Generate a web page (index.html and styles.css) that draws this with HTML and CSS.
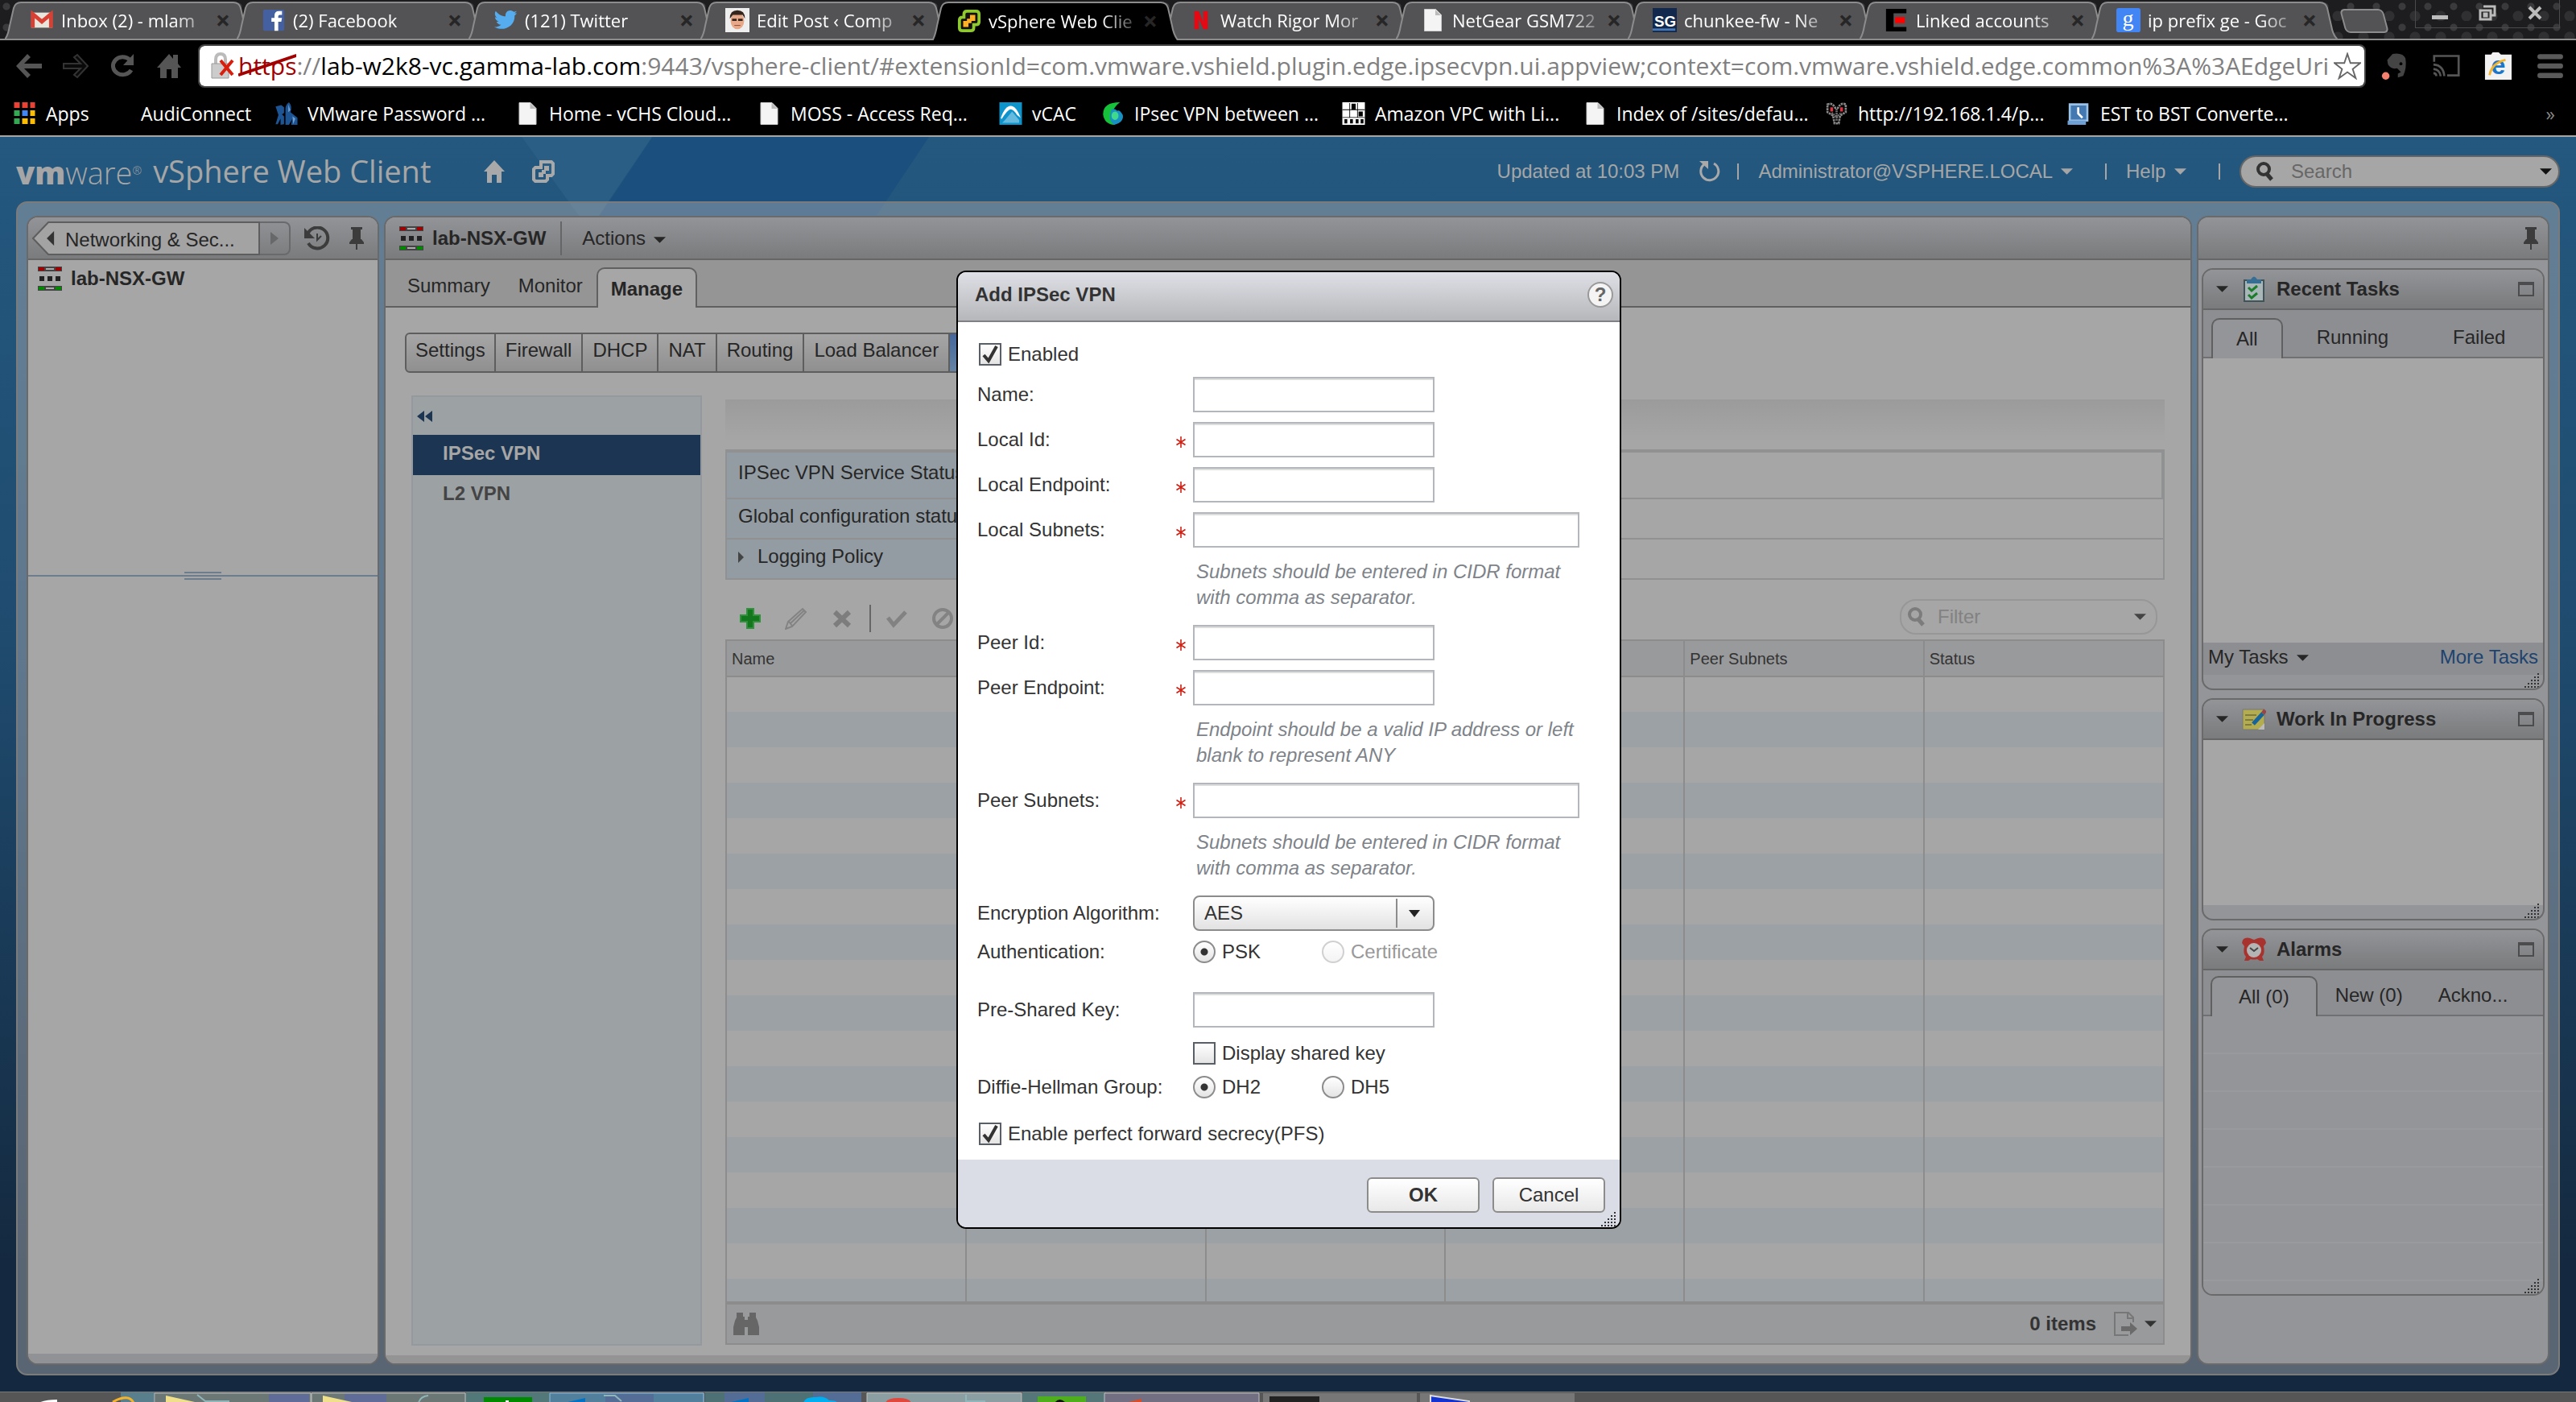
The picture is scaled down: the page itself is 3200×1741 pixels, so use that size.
FILE: index.html
```html
<!DOCTYPE html>
<html lang="en">

<head>
  <meta charset="UTF-8">
  <meta name="viewport" content="width=device-width, initial-scale=1.0">
  <title>vSphere Web Client</title>
  <link rel="stylesheet" href="styles.css">
</head>

<body>
  <svg class="defs" aria-hidden="true">
    <symbol id="page" viewBox="0 0 22 28"><path fill="#f4f4f4" stroke="#ccc" d="M.5.5h14l7 7v20H.5z"/><path fill="#bbb" d="M14 1v7h7z"/></symbol>
    <symbol id="down" viewBox="0 0 16 8"><path fill="currentColor" d="M0 0h16L8 8z"/></symbol>
    <symbol id="edge" viewBox="0 0 30 30">
      <path fill="#444" d="M0 0h30v6H0zM0 24h30v6H0z"/>
      <path fill="#a00000" d="M1 1h7v4H1zM22 1h7v4h-7z"/>
      <path fill="#008a00" d="M1 25h7v4H1zM22 25h7v4h-7z"/>
      <path fill="#aaa" d="M10 2h10v2H10zM10 26h10v2H10z"/>
      <path fill="#222" d="M2 12h6v6H2zM12 12h6v6h-6zM22 12h6v6h-6z"/>
    </symbol>
    <symbol id="pin" viewBox="0 0 18 28"><path fill="#3c3c3c" d="M2 0h14v3h-2v12h1l3 4v2H0v-2l3-4h1V3H2zM8 21h2v7H8z"/></symbol>
    <symbol id="glass" viewBox="0 0 24 26"><circle cx="10" cy="10" r="7" fill="none" stroke="currentColor" stroke-width="4"/><path stroke="currentColor" stroke-width="5" d="M14 16l6 7"/></symbol>
    <symbol id="max" viewBox="0 0 20 18"><path fill="none" stroke="#4c4c4e" stroke-width="2" d="M1 2h18v15H1z"/><path fill="#4c4c4e" d="M0 0h20v4H0z"/></symbol>
    <symbol id="grip" viewBox="0 0 20 20"><path stroke="#333" stroke-width="2" stroke-dasharray="2 2" d="M0 19h20M4 15h16M8 11h12M12 7h8M16 3h4"/></symbol>
    <symbol id="star" viewBox="0 0 12 14"><path stroke="#d22013" stroke-width="1.600" d="M6 0v14M.5 3.500l11 7M11.500 3.500l-11 7"/></symbol>
  </svg>

  <nav class="tabs">
    <a class="tab" href="#"><svg class="tab__icon" viewBox="0 0 32 32"><path fill="#e8e5dc" d="M2 6h28v20H2z"/><path fill="none" stroke="#d93f33" stroke-width="5" d="M4 26V8l12 10L28 8v18"/></svg><span class="tab__title">Inbox (2) - mlam</span><span class="tab__close">×</span></a>
    <a class="tab" href="#"><svg class="tab__icon" viewBox="0 0 32 32"><rect x="2" y="2" width="28" height="28" rx="2" fill="#4460a0"/><path fill="#fff" d="M17 30V18h-4v-5h4v-3q0-6 6-6h4v5h-3q-2 0-2 2v2h5l-1 5h-4v12z"/></svg><span class="tab__title">(2) Facebook</span><span class="tab__close">×</span></a>
    <a class="tab" href="#"><svg class="tab__icon" viewBox="0 0 32 32"><path fill="#55acee" d="M31 7l-3 3c1 14-15 22-27 15 4 0 7-1 9-3-3 0-5-2-6-4h3c-3-1-5-4-5-6l3 1C2 11 1 7 3 4c3 4 8 7 13 7-1-7 6-10 11-6l4-1-3 3z"/></svg><span class="tab__title">(121) Twitter</span><span class="tab__close">×</span></a>
    <a class="tab" href="#"><svg class="tab__icon" viewBox="0 0 32 32"><path fill="#eee" d="M0 0h32v32H0z"/><ellipse cx="16" cy="17" rx="9" ry="11" fill="#e7a98a"/><path fill="#35251d" d="M6 14q0-11 10-11t10 11l-3-5H10zM9 14h6v3H9zM17 14h6v3h-6z"/><path stroke="#843" d="M12 23h8"/></svg><span class="tab__title">Edit Post ‹ Comp</span><span class="tab__close">×</span></a>
    <a class="tab tab--active" href="#"><svg class="tab__icon" viewBox="0 0 32 32"><path fill="#111" stroke="#8fc92f" stroke-width="4" d="M13 3h12q4 0 4 4v10q0 4-4 4h-3v4q0 4-4 4H7q-4 0-4-4V15q0-4 4-4h2V7q0-4 4-4z"/><path fill="#ffb023" d="M17 8h7v8h-7zM8 16h7v8H8zM13 13h6v6h-6z"/></svg><span class="tab__title">vSphere Web Clie</span><span class="tab__close">×</span></a>
    <a class="tab" href="#"><svg class="tab__icon" viewBox="0 0 32 32"><path fill="#e50914" d="M7 4h6l6 14V4h6v24h-6l-6-14v14H7z"/></svg><span class="tab__title">Watch Rigor Mor</span><span class="tab__close">×</span></a>
    <a class="tab" href="#"><svg class="tab__icon tab__icon--page"><use href="#page"/></svg><span class="tab__title">NetGear GSM722</span><span class="tab__close">×</span></a>
    <a class="tab" href="#"><svg class="tab__icon" viewBox="0 0 32 32"><path fill="#12294d" d="M0 0h32v32H0z"/><path fill="#4a78b5" d="M0 27h30v3H0z"/><text x="2" y="24" class="fav">SG</text></svg><span class="tab__title">chunkee-fw - Ne</span><span class="tab__close">×</span></a>
    <a class="tab" href="#"><svg class="tab__icon" viewBox="0 0 32 32"><path d="M2 1h27v6H12v18h17v6H2z"/><path fill="#f00" d="M14 12h13v8H14z"/></svg><span class="tab__title">Linked accounts</span><span class="tab__close">×</span></a>
    <a class="tab" href="#"><svg class="tab__icon" viewBox="0 0 32 32"><rect width="32" height="32" rx="3" fill="#4285f4"/><text x="8" y="23" class="fav fav--g">g</text></svg><span class="tab__title">ip prefix ge - Goc</span><span class="tab__close">×</span></a>
    <button class="tabs__new" aria-label="New tab"></button>
    <div class="tabs__window">
      <button aria-label="Minimize"><svg viewBox="0 0 24 20"><path fill="#bbb" d="M2 13h20v5H2z"/></svg></button>
      <button aria-label="Restore"><svg viewBox="0 0 24 20"><path fill="none" stroke="#bbb" stroke-width="3" d="M7 2h14v11h-4M3 7h13v11H3zM8 11v3h3v-3z"/></svg></button>
      <button aria-label="Close"><svg viewBox="0 0 24 20"><path stroke="#bbb" stroke-width="4" d="M5 3l14 14M19 3L5 17"/></svg></button>
    </div>
  </nav>

  <div class="toolbar">
    <div class="toolbar__nav">
      <button aria-label="Back"><svg viewBox="0 0 32 32"><path fill="#555" d="M0 16L14 1l4 4-8 8h22v6H10l8 8-4 4z"/></svg></button>
      <button aria-label="Forward"><svg viewBox="0 0 32 32"><path fill="#0a0a0a" stroke="#333" stroke-width="2" d="M31 16L18 2l-4 3 8 8H1v6h21l-8 8 4 3z"/></svg></button>
      <button aria-label="Reload"><svg viewBox="0 0 32 32"><path fill="none" stroke="#555" stroke-width="5" d="M27 21a12 11 0 1 1-2-13"/><path fill="#555" d="M30 1v14H17z"/></svg></button>
      <button aria-label="Home"><svg viewBox="0 0 32 32"><path fill="#555" d="M16 1l5 6V2h6v11l4 5h-4v13h-8V20h-6v11H5V18H1z"/></svg></button>
    </div>
    <div class="omnibox">
      <svg class="omnibox__lock" viewBox="0 0 30 34"><path fill="none" stroke="#bbb" stroke-width="4" d="M6 16V9q0-7 6-7t6 7v7"/><path fill="#ccc" stroke="#999" d="M1 14h21v18H1z"/><path stroke="#d81e0c" stroke-width="4" d="M12 10l15 18M27 10L12 28"/></svg>
      <div class="omnibox__url"><span class="omnibox__scheme">https<svg viewBox="0 0 72 30" preserveAspectRatio="none"><path stroke="#a30000" stroke-width="4" d="M0 28L72 2"/></svg></span>://<b>lab-w2k8-vc.gamma-lab.com</b>:9443/vsphere-client/#extensionId=com.vmware.vshield.plugin.edge.ipsecvpn.ui.appview;context=com.vmware.vshield.edge.common%3A%3AEdgeUri</div>
      <svg class="omnibox__star" viewBox="0 0 36 36"><path fill="#fff" stroke="#666" stroke-width="2" d="M18 2l4 12h13l-10 8 4 12-11-8-11 8 4-12L1 14h13z"/></svg>
    </div>
    <div class="toolbar__ext">
      <svg viewBox="0 0 34 36"><path fill="#444" d="M8 10l7-8q14-2 17 6 2 12-3 23l-7 2v-5l4-2-5-5q-8 2-12-5z"/><circle cx="6" cy="31" r="5" fill="#f5806f"/><circle cx="26" cy="15" r="2"/></svg>
      <svg viewBox="0 0 38 32"><path fill="none" stroke="#555" stroke-width="3" d="M2 10V2h34v27H20"/><path fill="none" stroke="#555" stroke-width="3" d="M1 14q14 1 15 16M1 20q9 1 10 10M1 26q4 0 4 4"/></svg>
      <svg viewBox="0 0 36 36"><path fill="#f2f2f2" d="M1 3h8l2-3h8l3 3h14v33H1z"/><text x="9" y="29" class="fav fav--ie">e</text><path fill="none" stroke="#f3b52b" stroke-width="3" d="M7 30Q10 14 28 10"/></svg>
      <svg viewBox="0 0 32 30"><path stroke="#5a5a5a" stroke-width="6" stroke-linecap="round" d="M4 4h24M4 15h24M4 26h24"/></svg>
    </div>
  </div>

  <nav class="bookmarks">
    <a href="#"><svg viewBox="0 0 26 28"><path fill="#ea4335" d="M0 0h7v7H0zM10 0h7v7h-7zM20 0h6v7h-6z"/><path fill="#34a853" d="M0 10h7v7H0zM0 20h7v7H0z"/><path fill="#4285f4" d="M10 10h7v7h-7z"/><path fill="#fbbc05" d="M20 10h6v7h-6zM10 20h7v7h-7zM20 20h6v7h-6z"/></svg>Apps</a>
    <a href="#"><svg viewBox="0 0 32 32"></svg>AudiConnect</a>
    <a href="#"><svg viewBox="0 0 32 32"><path fill="#1d5594" d="M1 6l8-2 4 3v8l-3 2 3 3v11l-5 1v-9l-4 8H1l4-13zM15 12q-1-8 5-12 5 6 2 14l10 8v10h-9l2-9-5 9h-5z"/><path fill="#6f9fd0" d="M19 3l3 8-3 3zM25 20l4 3-3 8z"/></svg>VMware Password ...</a>
    <a href="#"><svg><use href="#page"/></svg>Home - vCHS Cloud...</a>
    <a href="#"><svg><use href="#page"/></svg>MOSS - Access Req...</a>
    <a href="#"><svg viewBox="0 0 32 32"><path fill="#0e94cd" d="M0 0h32v32H0z"/><path fill="#fff" d="M2 22Q8 5 16 5t14 17l-5-4q-5-8-9-8T3 24z"/><path fill="#65bade" d="M8 25l10-12 10 12v4H4z"/></svg>vCAC</a>
    <a href="#"><svg viewBox="0 0 32 32"><path fill="#16c23a" d="M26 0Q2 0 2 17q2 14 16 15l4-8-8-8q4-10 12-16z"/><path fill="#1791c4" d="M14 10q-6 16 4 22 14-4 12-14-4-8-8-6-4-4-8-2z"/><ellipse cx="19" cy="19" rx="5" ry="6" fill="#3fd98c"/></svg>IPsec VPN between ...</a>
    <a href="#"><svg viewBox="0 0 32 32"><path fill="#fff" d="M0 0h32v32H0z"/><path d="M13 2h6v8h-6zM23 13h6v7h-6zM3 24h4v6H3zM11 24h4v6h-4zM19 24h4v6h-4zM26 24h4v6h-4zM10 1h1v20h-1zM21 1h1v20h-1zM0 10h32v1H0zM0 21h32v1H0z"/></svg>Amazon VPC with Li...</a>
    <a href="#"><svg><use href="#page"/></svg>Index of /sites/defau...</a>
    <a href="#"><svg viewBox="0 0 32 32"><path fill="none" stroke="#888" stroke-width="3" stroke-dasharray="3 1" d="M3 3q7-3 11 5h4q4-8 11-5v11l-8 5-2 11h-6l-2-11-8-5z"/><path fill="none" stroke="#777" stroke-dasharray="2 1" stroke-width="3" d="M9 15l7 6 7-6M16 9v18"/><path fill="#d34" d="M7 7h4v6H7zM21 7h4v6h-4z"/></svg>http://192.168.1.4/p...</a>
    <a href="#"><svg viewBox="0 0 32 32"><path fill="#4379b0" stroke="#9cc2e8" stroke-width="3" d="M3 3h25v23H3z"/><path fill="#6ea0d5" d="M0 26h26v6H0z"/><path fill="none" stroke="#fff" stroke-width="3" d="M15 7v9l6 6"/></svg>EST to BST Converte...</a>
    <span class="bookmarks__more">»</span>
  </nav>

  <div class="app">
    <header class="header">
      <h1 class="header__title"><span class="header__brand"><b>vm</b>ware<sup>®</sup></span>vSphere Web Client</h1>
      <svg class="header__home" viewBox="0 0 26 28"><path fill="#a9a9a9" d="M13 0l13 14h-4v14h-6V18h-6v10H4V14H0z"/></svg>
      <svg class="header__vs" viewBox="0 0 28 28"><path fill="none" stroke="#a9a9a9" stroke-width="4" d="M11 2h13l2 2v13l-2 2h-5v5l-2 2H4l-2-2V11l2-2h7z"/><path fill="#a9a9a9" d="M15 7h6v6h-6zM8 15h6v6H8zM12 12h5v5h-5z"/></svg>
      <div class="header__right">
        <span>Updated at 10:03 PM</span>
        <svg class="header__refresh" viewBox="0 0 28 28"><path fill="none" stroke="#a9a9a9" stroke-width="3" d="M19 4a11 11 0 1 1-12 1"/><path fill="#a9a9a9" d="M1 1h11v10z"/></svg>
        <i></i>
        <a href="#">Administrator@VSPHERE.LOCAL <svg class="arrow"><use href="#down"/></svg></a>
        <i></i>
        <a href="#">Help <svg class="arrow"><use href="#down"/></svg></a>
        <i></i>
        <label class="search"><svg class="search__icon"><use href="#glass"/></svg><input type="text" placeholder="Search" aria-label="Search"><svg class="arrow"><use href="#down"/></svg></label>
      </div>
    </header>

    <main class="frame">
      <aside class="panel">
        <div class="panel__header">
          <button class="back"><svg viewBox="0 0 282 42" preserveAspectRatio="none"><path fill="#a3a3a3" stroke="#5e5e5e" stroke-width="2" d="M281 1H20L1 21l19 20h261z"/><path fill="#333" d="M18 21l9-9v18z"/></svg><span>Networking &amp; Sec...</span></button>
          <button class="forward" aria-label="Forward"><svg viewBox="0 0 10 16"><path fill="#67686a" d="M0 0l10 8-10 8z"/></svg></button>
          <svg class="history" viewBox="0 0 32 30"><path fill="none" stroke="#3c3c3c" stroke-width="4" d="M4 10a13 13 0 1 1 1 11"/><path fill="#3c3c3c" d="M0 2v13h13z"/><path fill="none" stroke="#3c3c3c" stroke-width="2" d="M16 9v8l5-5"/></svg>
          <svg class="pin"><use href="#pin"/></svg>
        </div>
        <div class="tree">
          <a class="tree__item" href="#"><svg class="edge"><use href="#edge"/></svg>lab-NSX-GW</a>
        </div>
        <div class="splitter"><span></span></div>
        <div class="panel__fill"></div>
        <div class="panel__footer"></div>
      </aside>

      <section class="panel">
        <div class="panel__header panel__header--object">
          <svg class="edge"><use href="#edge"/></svg>
          <b>lab-NSX-GW</b>
          <button class="actions">Actions <svg class="arrow"><use href="#down"/></svg></button>
        </div>
        <nav class="objectTabs">
          <a href="#">Summary</a>
          <a href="#">Monitor</a>
          <a class="active" href="#">Manage</a>
        </nav>
        <div class="manage">
          <div class="buttonBar">
            <button>Settings</button><button>Firewall</button><button>DHCP</button><button>NAT</button><button>Routing</button><button>Load Balancer</button><span class="buttonBar__on"></span>
          </div>
          <div class="manage__body">
            <nav class="sideNav">
              <button class="sideNav__collapse" aria-label="Collapse"><svg viewBox="0 0 20 14"><path fill="#1b3552" d="M9 0v14L0 7zM19 0v14l-9-7z"/></svg></button>
              <a class="active" href="#">IPSec VPN</a>
              <a href="#">L2 VPN</a>
            </nav>
            <div class="content">
              <div class="content__bar"></div>
              <div class="status">
                <div class="status__row status__row--first"><span>IPSec VPN Service Status</span></div>
                <div class="status__row"><span>Global configuration status</span></div>
                <div class="status__row"><span><svg class="twisty" viewBox="0 0 7 14"><path fill="#444" d="M0 0l7 7-7 7z"/></svg>Logging Policy</span></div>
              </div>
              <div class="tools">
                <button aria-label="Add"><svg viewBox="0 0 28 28"><path fill="#12771d" stroke="#2f9139" stroke-width="2" d="M10 2h8v8h8v8h-8v8h-8v-8H2v-8h8z"/></svg></button>
                <button aria-label="Edit"><svg viewBox="0 0 28 28"><path fill="none" stroke="#838383" stroke-width="2" d="M1 27l3-9L22 2l4 4L9 24zM5 18l4 5M7 20L24 4"/></svg></button>
                <button aria-label="Delete"><svg viewBox="0 0 28 28"><path stroke="#7d7d7d" stroke-width="6" d="M5 6l18 17M23 6L5 23"/></svg></button>
                <i></i>
                <button aria-label="Enable"><svg viewBox="0 0 28 28"><path fill="none" stroke="#828282" stroke-width="5" d="M3 13l7 9L25 6"/></svg></button>
                <button aria-label="Disable"><svg viewBox="0 0 28 28"><circle cx="14" cy="14" r="11" fill="none" stroke="#838383" stroke-width="4"/><path stroke="#838383" stroke-width="4" d="M6 22L22 6"/></svg></button>
                <label class="filter"><svg class="search__icon"><use href="#glass"/></svg><input type="text" placeholder="Filter" aria-label="Filter"><svg class="arrow"><use href="#down"/></svg></label>
              </div>
              <div class="grid">
                <table>
                  <thead>
                    <tr><th>Name</th><th></th><th></th><th></th><th>Peer Subnets</th><th>Status</th></tr>
                  </thead>
                  <tbody id="rows"></tbody>
                </table>
              </div>
              <div class="grid__footer">
                <svg class="find" viewBox="0 0 32 28"><path fill="#666" d="M4 0h8v5h2v4h4V5h2V0h8v6l2 4 2 8v10H18V18h-4v10H0V18l2-8 2-4z"/></svg>
                <b>0 items</b>
                <svg class="export" viewBox="0 0 30 30"><path fill="none" stroke="#777" stroke-width="2" d="M18 29H1V1h17l6 6v6M17 1v7h7"/><path fill="#6a6a6a" d="M9 18h11v-5l9 8-9 8v-5H9z"/></svg>
                <svg class="arrow"><use href="#down"/></svg>
              </div>
            </div>
          </div>
        </div>
        <div class="panel__footer panel__footer--light"></div>
      </section>

      <aside class="panel panel--side">
        <div class="panel__header panel__header--end"><svg class="pin"><use href="#pin"/></svg></div>
        <section class="portlet portlet--tasks">
          <h2><svg class="arrow"><use href="#down"/></svg><svg class="portlet__icon" viewBox="0 0 30 32"><path fill="#a9b7b9" stroke="#3f5358" stroke-width="2" d="M3 5h24v26H3z"/><path fill="#366d92" d="M6 4h5q4-7 8 0h5v5H6z"/><path fill="none" stroke="#1b7d2c" stroke-width="3" d="M8 14l4 4 7-6M8 23l4 4 7-6"/></svg>Recent Tasks<svg class="max"><use href="#max"/></svg></h2>
          <nav><a class="active" href="#">All</a><a href="#">Running</a><a href="#">Failed</a></nav>
          <div class="portlet__body"></div>
          <div class="portlet__links"><a href="#">My Tasks <svg class="arrow"><use href="#down"/></svg></a><a class="more" href="#">More Tasks</a></div>
          <div class="portlet__foot"></div>
          <svg class="grip"><use href="#grip"/></svg>
        </section>
        <section class="portlet portlet--work">
          <h2><svg class="arrow"><use href="#down"/></svg><svg class="portlet__icon" viewBox="0 0 30 32"><path fill="#b3ad50" stroke="#777" d="M1 4h27v25H1z"/><path stroke="#7c7a45" stroke-width="2" d="M4 11h14M4 17h10M4 23h8"/><path stroke="#16649a" stroke-width="5" d="M14 22L26 9"/><path stroke="#944" stroke-width="5" d="M26 9l3-4"/><path fill="#bbb" d="M20 29l8-8v8z"/></svg>Work In Progress<svg class="max"><use href="#max"/></svg></h2>
          <div class="portlet__body"></div>
          <div class="portlet__foot"></div>
          <svg class="grip"><use href="#grip"/></svg>
        </section>
        <section class="portlet portlet--alarms">
          <h2><svg class="arrow"><use href="#down"/></svg><svg class="portlet__icon" viewBox="0 0 30 32"><path fill="#a8332e" d="M0 8q1-8 10-6l5 2 5-2q9-2 10 6l-3 4q2 9-2 13l2 5h-5l-3-2q-4 1-8 0l-3 2H3l2-5q-4-4-2-13z"/><circle cx="15" cy="17" r="9" fill="#b4b4b4"/><path fill="none" stroke="#444" stroke-width="2" d="M10 14l5 4 5-4"/></svg>Alarms<svg class="max"><use href="#max"/></svg></h2>
          <nav><a class="active" href="#">All (0)</a><a href="#">New (0)</a><a href="#">Ackno...</a></nav>
          <div class="portlet__body portlet__body--lines"></div>
          <svg class="grip"><use href="#grip"/></svg>
        </section>
      </aside>
    </main>

    <div class="overlay">
      <form class="dialog" role="dialog" aria-labelledby="dialogTitle" onsubmit="return false">
        <div class="dialog__header">
          <h2 id="dialogTitle">Add IPSec VPN</h2>
          <button type="button" class="dialog__help" aria-label="Help">?</button>
        </div>
        <div class="dialog__body">
          <label class="check row--check"><input type="checkbox" checked>Enabled</label>
          <div class="row"><label for="name">Name:</label><input id="name" type="text"></div>
          <div class="row"><label for="localId">Local Id:<svg class="req"><use href="#star"/></svg></label><input id="localId" type="text"></div>
          <div class="row"><label for="localEndpoint">Local Endpoint:<svg class="req"><use href="#star"/></svg></label><input id="localEndpoint" type="text"></div>
          <div class="row row--hinted"><label for="localSubnets">Local Subnets:<svg class="req"><use href="#star"/></svg></label><input id="localSubnets" class="wide" type="text"></div>
          <p class="hint">Subnets should be entered in CIDR format<br>with comma as separator.</p>
          <div class="row"><label for="peerId">Peer Id:<svg class="req"><use href="#star"/></svg></label><input id="peerId" type="text"></div>
          <div class="row row--hinted"><label for="peerEndpoint">Peer Endpoint:<svg class="req"><use href="#star"/></svg></label><input id="peerEndpoint" type="text"></div>
          <p class="hint">Endpoint should be a valid IP address or left<br>blank to represent ANY</p>
          <div class="row row--hinted"><label for="peerSubnets">Peer Subnets:<svg class="req"><use href="#star"/></svg></label><input id="peerSubnets" class="wide" type="text"></div>
          <p class="hint">Subnets should be entered in CIDR format<br>with comma as separator.</p>
          <div class="row"><label for="algorithm">Encryption Algorithm:</label><select id="algorithm"><option>AES</option></select></div>
          <div class="row row--auth"><span class="row__label">Authentication:</span><label class="check"><input type="radio" name="auth" checked>PSK</label><label class="check check--off"><input type="radio" name="auth" disabled>Certificate</label></div>
          <div class="row row--key"><label for="psk">Pre-Shared Key:</label><input id="psk" type="text"></div>
          <div class="row row--display"><span class="row__label"></span><label class="check check--wide"><input type="checkbox">Display shared key</label></div>
          <div class="row row--group"><span class="row__label">Diffie-Hellman Group:</span><label class="check"><input type="radio" name="dh" checked>DH2</label><label class="check"><input type="radio" name="dh">DH5</label></div>
          <label class="check"><input type="checkbox" checked>Enable perfect forward secrecy(PFS)</label>
        </div>
        <div class="dialog__footer">
          <button type="submit"><b>OK</b></button>
          <button type="button">Cancel</button>
          <svg class="grip"><use href="#grip"/></svg>
        </div>
      </form>
    </div>
  </div>

  <footer class="taskbar">
    <svg viewBox="0 0 1960 13" preserveAspectRatio="xMinYMin slice">
      <path fill="#5a7f8c" d="M150 0h42v13h-42z"/>
      <path fill="#6b7775" d="M193 1h386v12H193z"/>
      <path fill="#5f6c97" d="M334 2h50v11h-50zM428 2h52v11h-52z"/>
      <path fill="#53787a" d="M579 0h104v13H579z"/>
      <path fill="#52809c" d="M683 1h192v12H683z"/>
      <path fill="#546d96" d="M752 2h60v11h-60zM900 0h50v13h-50zM1010 0h60v13h-60z"/>
      <path fill="#4d7174" d="M876 0h24v13h-24zM950 0h60v13h-60z"/>
      <path fill="#8b9fa3" d="M1077 1h192v12h-192z"/>
      <path fill="#55777a" d="M1270 0h104v13h-104z"/>
      <path fill="#726f83" d="M1372 1h192v12h-192z"/>
      <path fill="none" stroke="#8fb6ba" stroke-width="2" d="M245 3l10 8h30M750 4h14l8 7M520 13q2-8 12-9M1200 3v8h24"/>
      <path fill="none" stroke="#c0c4c4" d="M192 13V1h194v12M387 13V1h191v12M1077 13V1h192v12M1372 13V1h192v12"/>
      <path fill="none" stroke="#8bbbe0" d="M683 13V1h191v12"/>
      <path fill="#fff" d="M48 13q8-4 23-4v4z"/>
      <path fill="none" stroke="#f4b32a" stroke-width="3" d="M140 12q20-11 26 1"/>
      <path fill="#f0e08b" d="M206 4l36 8v1h-36zM401 4l36 8v1h-36z"/>
      <path fill="#008a00" d="M601 6h60v7h-60z"/>
      <path fill="#fff" d="M628 10h4v3h-4z"/>
      <path fill="#0072c6" d="M701 13l26-6v6zM904 13l26-6v6z"/>
      <path fill="#00aff0" d="M998 13q2-8 16-7 10-2 16 4 10 0 10 3z"/>
      <path fill="#e0483e" d="M1100 13q2-6 16-6t16 6z"/>
      <path fill="#4fae1c" d="M1289 5h60v8h-60z"/>
      <path fill="#111" d="M1310 13q6-8 14 0z"/>
      <path fill="#dc4a26" d="M1398 13l20-5v5z"/>
      <path fill="#777" d="M1569 1h191v12h-191zM1764 1h192v12h-192z"/>
      <path fill="#222" d="M1577 5h62v8h-62z"/>
      <path fill="#1432d0" stroke="#ddd" stroke-width="2" d="M1777 13V4l48 7v4z"/>
    </svg>
  </footer>

  <script>
    // empty striped rows, six cells each
    const rows = document.getElementById("rows");
    for (let i = 0; i < 18; i++) {
      const tr = rows.insertRow();
      for (let j = 0; j < 6; j++) {
        tr.insertCell();
      }
    }
  </script>
</body>

</html>
```
FILE: styles.css
```css
* {
  box-sizing: border-box;
}

body {
  background-color: #000;
  color: #222;
  display: flex;
  flex-direction: column;
  font-family: "Liberation Sans", Arial, sans-serif;
  font-size: 24px;
  height: 100vh;
  line-height: 28px;
  margin: 0;
  overflow: hidden;
}

a {
  color: inherit;
  text-decoration: none;
}

button,
input,
select {
  color: inherit;
  font: inherit;
}

button {
  background: none;
  border: none;
  padding: 0;
}

h1,
h2,
p {
  margin: 0;
}

svg {
  flex: none;
}

.defs {
  height: 0;
  position: absolute;
  width: 0;
}

.arrow {
  height: 8px;
  width: 15px;
}

/* browser */

.tabs,
.toolbar,
.bookmarks {
  color: #fff;
  display: flex;
  flex: none;
  font-family: "Open Sans", "Noto Sans", sans-serif;
}

.tabs {
  background-color: #1d1d1f;
  background-image: radial-gradient(circle at 8px 8px, #3a3a3c 4px, transparent 5px), radial-gradient(circle at 24px 20px, #303032 6px, transparent 7px);
  background-size: 32px 26px;
  border-bottom: 2px solid #8c8c8c;
  height: 50px;
  padding-left: 6px;
}

.tab {
  align-items: center;
  background: url("data:image/svg+xml,%3Csvg xmlns='http://www.w3.org/2000/svg' viewBox='0 0 306 46' preserveAspectRatio='none'%3E%3Cpath fill='%23535355' stroke='%238c8c8c' stroke-width='2' d='M0 47Q4 42 6 30L11 8Q13 1 20 1H284Q291 1 293 8L298 30Q300 42 306 47'/%3E%3C/svg%3E") 0 0 / 100% 100%;
  display: flex;
  font-size: 22px;
  height: 46px;
  line-height: 36px;
  margin: 2px -18px 0 0;
  padding: 0 26px 0 30px;
  width: 306px;
}

.tab--active {
  background-image: url("data:image/svg+xml,%3Csvg xmlns='http://www.w3.org/2000/svg' viewBox='0 0 306 48' preserveAspectRatio='none'%3E%3Cpath stroke='%238c8c8c' stroke-width='2' d='M0 49Q4 42 6 30L11 8Q13 1 20 1H284Q291 1 293 8L298 30Q300 42 306 49'/%3E%3C/svg%3E");
  height: 48px;
  z-index: 1;
}

.tab__icon {
  height: 30px;
  width: 32px;
}

.tab__icon--page {
  height: 28px;
}

.tab__title {
  flex: 1;
  margin: 0 6px 0 8px;
  mask-image: linear-gradient(to right, #000 75%, transparent 105%);
  overflow: hidden;
  white-space: nowrap;
}

.tab__close {
  color: #262626;
  font-size: 32px;
  font-weight: bold;
}

.fav {
  fill: #fff;
  font: bold 20px "Liberation Sans", sans-serif;
}

.fav--g {
  font: 30px "Liberation Serif", serif;
}

.fav--ie {
  fill: #1b76c9;
  font-size: 34px;
}

.tabs__new {
  background-color: #535355;
  border: 2px solid #8c8c8c;
  border-radius: 6px;
  height: 30px;
  margin: 11px 0 0 24px;
  transform: skewX(15deg);
  width: 54px;
}

.tabs__window {
  border: 1px solid #4a4a4c;
  border-top: none;
  display: flex;
  height: 35px;
  justify-content: space-around;
  margin-left: auto;
  margin-right: 20px;
  width: 180px;
}

.tabs__window svg {
  height: 20px;
  width: 24px;
}

.toolbar {
  align-items: center;
  height: 64px;
  padding: 0 15px 0 20px;
}

.toolbar__nav {
  display: flex;
  gap: 26px;
  width: 228px;
}

.toolbar__nav svg {
  display: block;
  height: 32px;
  width: 32px;
}

.omnibox {
  align-items: center;
  background-color: #fff;
  border-radius: 6px;
  color: #808080;
  display: flex;
  flex: 1;
  font-size: 30px;
  height: 50px;
  min-width: 0;
  outline: 2px solid #444;
  padding: 0 4px 0 14px;
}

.omnibox__lock {
  height: 34px;
  width: 30px;
}

.omnibox__url {
  flex: 1;
  line-height: 44px;
  margin-left: 4px;
  overflow: hidden;
  white-space: nowrap;
}

.omnibox__url b {
  color: #000;
  font-weight: normal;
}

.omnibox__scheme {
  color: #a30000;
  position: relative;
}

.omnibox__scheme svg {
  height: 28px;
  left: 0;
  position: absolute;
  top: 6px;
  width: 100%;
}

.omnibox__star {
  height: 34px;
  width: 34px;
}

.toolbar__ext {
  align-items: center;
  display: flex;
  justify-content: space-between;
  margin-left: 20px;
  width: 228px;
}

.toolbar__ext svg {
  height: 34px;
  width: 34px;
}

.bookmarks {
  align-items: center;
  border-bottom: 2px solid #a6a6a6;
  display: grid;
  font-size: 23px;
  grid-template-columns: 118px 207px 300px 300px 300px 127px 299px 300px 300px 301px 1fr auto;
  height: 56px;
  line-height: 36px;
  padding: 0 26px 0 15px;
}

.bookmarks a {
  align-items: center;
  display: flex;
  gap: 11px;
  white-space: nowrap;
}

.bookmarks svg {
  height: 28px;
  width: 31px;
}

.bookmarks__more {
  color: #888;
}

/* application */

.app {
  background: linear-gradient(#24587f, #1f4b6f 40%, #14293f 90%);
  color: #262626;
  display: flex;
  flex: 1;
  flex-direction: column;
  min-height: 0;
  padding: 0 20px 20px;
  position: relative;
}

/* facets of the header backdrop */
.app::before,
.app::after {
  background-color: #1b4f7e;
  clip-path: polygon(16% 0, 100% 0, 84% 100%, 0 100%);
  content: "";
  height: 98px;
  left: 745px;
  position: absolute;
  top: 0;
  width: 409px;
}

.app::after {
  background-color: #2a5e84;
  clip-path: polygon(0 0, 100% 0, 59% 100%, 44% 100%);
  left: 648px;
  width: 162px;
}

.header {
  align-items: center;
  color: #a6a6a6;
  display: flex;
  height: 80px;
  padding-top: 5px;
  position: relative;
  z-index: 1;
}

.header__title {
  display: flex;
  font: 38px/44px "Open Sans", sans-serif;
  gap: 14px;
}

.header__brand {
  font-weight: 300;
}

.header__brand b {
  font-weight: 800;
}

.header__brand sup {
  font-size: 14px;
  vertical-align: 12px;
}

.header__home {
  height: 28px;
  margin-left: 66px;
  width: 26px;
}

.header__vs {
  height: 28px;
  margin-left: 34px;
  width: 28px;
}

.header__right {
  align-items: center;
  display: flex;
  margin-left: auto;
}

.header__right a {
  white-space: pre;
}

.header__right .arrow {
  margin: 0 40px 4px 4px;
}

.header__right i {
  background-color: #a6a6a6;
  height: 20px;
  margin-right: 24px;
  width: 2px;
}

.header__refresh {
  height: 28px;
  margin: 0 20px 0 24px;
  width: 28px;
}

.search,
.filter {
  align-items: center;
  border: 2px solid #666;
  border-radius: 20px;
  display: flex;
}

.search {
  background-color: #a6a6a6;
  color: #333;
  height: 40px;
  padding-left: 18px;
  width: 398px;
}

.search input,
.filter input {
  background: none;
  border: none;
  flex: 1;
  margin-left: 20px;
  min-width: 0;
  outline: none;
  padding: 0;
}

.search input::placeholder {
  color: #666;
}

.header__right .search .arrow {
  color: #111;
  margin: 0 8px 0 0;
}

.search__icon {
  height: 26px;
  width: 24px;
}

.frame {
  background-color: rgba(175, 175, 180, .45);
  border: 2px solid #7b7b7b;
  border-radius: 14px;
  display: grid;
  flex: 1;
  gap: 6px;
  grid-template-columns: 438px 1fr 438px;
  min-height: 0;
  padding: 16px 11px 11px;
  position: relative;
  z-index: 1;
}

.panel {
  background-color: #a6a6a6;
  border: 2px solid #6a6a6a;
  border-radius: 14px;
  display: flex;
  flex-direction: column;
  min-height: 0;
  min-width: 0;
  overflow: hidden;
}

.panel--side {
  background-color: #949599;
}

.panel__header {
  align-items: center;
  background-image: linear-gradient(#939498, #7a7b7c);
  border-bottom: 2px solid #666;
  display: flex;
  flex: none;
  height: 53px;
  padding: 0 17px 0 5px;
}

.panel__header--end {
  justify-content: flex-end;
  padding-right: 12px;
}

.panel__header--object {
  padding-left: 17px;
}

.panel__header--object b {
  margin-left: 11px;
}

.back {
  height: 42px;
  padding: 4px 0 0 41px;
  position: relative;
  text-align: left;
  width: 283px;
}

.back svg {
  height: 100%;
  left: 0;
  position: absolute;
  top: 0;
  width: 100%;
}

.back span {
  position: relative;
}

.forward {
  border: 2px solid #6a6a6c;
  border-left: none;
  border-radius: 0 8px 8px 0;
  height: 42px;
  width: 38px;
}

.forward svg {
  height: 16px;
  width: 10px;
}

.history {
  height: 30px;
  margin-left: 17px;
  width: 32px;
}

.pin {
  height: 28px;
  margin-left: auto;
  width: 18px;
}

.edge {
  height: 30px;
  width: 30px;
}

.tree {
  height: 385px;
  padding: 8px 12px;
}

.tree__item {
  align-items: center;
  display: flex;
  font-weight: bold;
  gap: 11px;
  height: 30px;
}

.splitter {
  border-color: #6c7e8d;
  border-style: solid;
  border-width: 2px 0 0;
  display: flex;
  height: 6px;
  justify-content: center;
  margin-top: 6px;
}

.splitter span {
  border-bottom: 2px solid #6c7e8d;
  border-top: 2px solid #6c7e8d;
  height: 10px;
  margin-top: -6px;
  width: 46px;
}

.panel__fill {
  flex: 1;
}

.panel__footer {
  background-color: #919296;
  flex: none;
  height: 12px;
}

.panel__footer--light {
  background-color: #949494;
  height: 10px;
}

.actions {
  border-left: 2px solid #666;
  height: 42px;
  margin-left: 18px;
  padding-left: 25px;
}

.actions .arrow {
  margin: 0 0 2px 3px;
}

.objectTabs {
  background-color: #959595;
  border-bottom: 2px solid #606060;
  display: flex;
  flex: none;
  height: 59px;
  padding: 9px 27px 0;
}

.objectTabs a {
  line-height: 46px;
  margin-right: 35px;
}

.objectTabs a + a {
  margin-right: 17px;
}

.objectTabs .active {
  background-color: #a6a6a6;
  border: 2px solid #606060;
  border-bottom: none;
  border-radius: 10px 10px 0 0;
  font-weight: bold;
  height: 50px;
  line-height: 50px;
  padding: 0 16px;
}

.manage {
  display: flex;
  flex: 1;
  flex-direction: column;
  min-height: 0;
  padding: 31px 32px 12px;
}

.buttonBar {
  display: flex;
  flex: none;
  height: 50px;
  margin-left: -8px;
}

.buttonBar button,
.buttonBar__on {
  background-image: linear-gradient(#a6a6a6, #8f8f8f);
  border: 2px solid #5e5e5e;
  margin-left: -2px;
  padding: 0 12px 6px;
}

.buttonBar button:first-child {
  border-radius: 6px 0 0 6px;
  margin-left: 0;
  padding: 0 11px 6px;
}

.buttonBar__on {
  background-image: linear-gradient(#45679b, #6583a3);
  width: 80px;
}

.manage__body {
  display: flex;
  flex: 1;
  gap: 29px;
  margin-top: 28px;
  min-height: 0;
}

.sideNav {
  background-color: #9ca1a4;
  border: 2px solid #93999e;
  color: #444;
  font-weight: bold;
  width: 361px;
}

.sideNav__collapse {
  display: block;
  height: 47px;
  padding: 0 5px;
}

.sideNav__collapse svg {
  display: block;
  height: 14px;
  width: 20px;
}

.sideNav a {
  display: block;
  line-height: 46px;
  padding: 0 37px 4px;
}

.sideNav .active {
  background-color: #1b3552;
  color: #a6a6a6;
}

.content {
  display: flex;
  flex: 1;
  flex-direction: column;
  min-width: 0;
  padding-bottom: 1px;
}

.content__bar {
  background-image: linear-gradient(#9b9b9b, #a6a6a6);
  height: 52px;
  margin: 5px 0 10px;
}

.status {
  border: 2px solid #8f9193;
  border-bottom: none;
}

.status__row {
  background-image: linear-gradient(#939ca2, #939ca2);
  background-repeat: no-repeat;
  background-size: 480px 100%;
  border-bottom: 2px solid #8f9193;
  height: 50px;
  line-height: 42px;
  padding-left: 14px;
}

.status__row--first {
  border-right: 2px solid #8f9193;
  border-top: 2px solid #8f9193;
  height: 60px;
  line-height: 50px;
}

.twisty {
  height: 14px;
  margin-right: 17px;
  width: 7px;
}

.tools {
  align-items: center;
  display: flex;
  height: 74px;
  padding: 22px 9px 0 17px;
}

.tools button {
  height: 28px;
  margin-right: 29px;
}

.tools svg {
  height: 28px;
  width: 28px;
}

.tools i {
  background-color: #666;
  height: 34px;
  margin: 0 18px 0 -9px;
  width: 2px;
}

.tools .filter {
  border-color: #979797;
  color: #7c7c7c;
  height: 44px;
  margin: 0 0 4px auto;
  padding: 0 12px 0 7px;
  width: 320px;
}

.tools .search__icon {
  height: 26px;
  width: 24px;
}

.tools .filter input {
  margin-left: 14px;
}

.filter input::placeholder {
  color: #828282;
}

.tools .filter .arrow {
  color: #444;
  height: 8px;
  width: 15px;
}

.grid {
  border: 2px solid #8c8c8c;
  flex: 1;
  min-height: 0;
  overflow: hidden;
}

table {
  border-collapse: collapse;
  table-layout: fixed;
  width: 100%;
}

th,
td {
  border-left: 2px solid #8c8c8c;
  height: 44px;
  padding: 0 6px;
}

th:first-child,
td:first-child {
  border-left: none;
}

th {
  background-color: #999a9c;
  border-bottom: 2px solid #8c8c8c;
  color: #333;
  font-size: 20px;
  font-weight: normal;
  text-align: left;
}

tbody tr:nth-child(even) {
  background-color: #9ca1a5;
}

.grid__footer {
  align-items: center;
  background-color: #999a9c;
  border: 2px solid #8c8c8c;
  color: #333;
  display: flex;
  flex: none;
  height: 52px;
  padding: 0 8px;
}

.grid__footer b {
  margin-left: auto;
}

.find {
  height: 28px;
  width: 32px;
}

.export {
  height: 30px;
  margin: 0 8px 0 22px;
  width: 30px;
}

/* right hand portlets */

.portlet {
  border: 2px solid #6a6a6a;
  border-radius: 14px;
  display: flex;
  flex: none;
  flex-direction: column;
  margin: 10px 4px 0;
  overflow: hidden;
  position: relative;
}

.portlet--tasks {
  height: 524px;
}

.portlet--work {
  height: 276px;
}

.portlet--alarms {
  height: 456px;
}

.portlet h2 {
  align-items: center;
  background-image: linear-gradient(#939498, #7a7b7c);
  border-bottom: 2px solid #666;
  display: flex;
  flex: none;
  font-size: 24px;
  height: 50px;
  padding: 0 11px 0 16px;
}

.portlet__icon {
  height: 32px;
  margin: 0 13px 0 17px;
  width: 30px;
}

.max {
  height: 18px;
  margin-left: auto;
  width: 20px;
}

.portlet nav {
  background-color: #8d8e92;
  border-bottom: 2px solid #707072;
  display: flex;
  flex: none;
  height: 60px;
  padding: 10px 0 0 10px;
}

.portlet nav a {
  line-height: 47px;
  margin-left: 42px;
  margin-right: 38px;
}

.portlet nav .active {
  background-color: #949599;
  border: 2px solid #606060;
  border-bottom: none;
  border-radius: 10px 10px 0 0;
  height: 50px;
  line-height: 48px;
  margin: 0;
  padding: 0 29px;
}

.portlet--alarms nav {
  height: 57px;
  padding: 7px 0 0 9px;
}

.portlet--alarms nav a {
  margin-left: 22px;
  margin-right: 22px;
}

.portlet--alarms nav .active {
  padding: 0 33px;
}

.portlet__body {
  background-color: #a6a6a6;
  flex: 1;
}

.portlet__body--lines {
  background: repeating-linear-gradient(#949599 0 45px, #999a9e 45px 47px);
}

.portlet__links {
  background-color: #8d8e92;
  display: flex;
  height: 40px;
  justify-content: space-between;
  line-height: 36px;
  padding: 0 6px;
}

.portlet__links .arrow {
  margin: 0 0 3px 4px;
}

.more {
  color: #1d436f;
}

.portlet__foot {
  height: 17px;
}

.grip {
  bottom: 1px;
  height: 20px;
  position: absolute;
  right: 3px;
  width: 20px;
}

/* dialog */

.overlay {
  display: flex;
  inset: 0;
  justify-content: center;
  padding: 166px 0 0 2px;
  position: absolute;
  z-index: 2;
}

.dialog {
  align-self: flex-start;
  background-color: #fff;
  border: 2px solid #000;
  border-radius: 12px;
  color: #333;
  overflow: hidden;
  width: 826px;
}

.dialog__header {
  align-items: center;
  background-image: linear-gradient(#dfe0e5, #b6b7bb);
  border-bottom: 2px solid #808084;
  display: flex;
  height: 62px;
  justify-content: space-between;
  padding: 0 8px 4px 21px;
}

.dialog__header h2 {
  font-size: 24px;
}

.dialog__help {
  background-color: #f4f4f4;
  border: 2px solid #999;
  border-radius: 16px;
  color: #666;
  font-weight: bold;
  height: 32px;
  width: 32px;
}

.dialog__body {
  padding: 26px 24px 18px;
}

.row {
  display: flex;
  margin-bottom: 12px;
}

.row > label:first-child,
.row__label {
  align-items: center;
  display: flex;
  justify-content: space-between;
  padding: 0 9px 0 0;
  width: 268px;
}

.row--check {
  margin-bottom: 14px;
}

.row--hinted {
  margin-bottom: 14px;
}

.row--auth {
  margin-bottom: 36px;
}

.row--key {
  margin-bottom: 18px;
}

.row--display {
  margin-bottom: 14px;
}

.row--group {
  margin-bottom: 30px;
}

.req {
  height: 14px;
  margin-top: 6px;
  width: 12px;
}

.dialog input[type="text"],
.dialog select {
  border: 2px solid #b3b6ba;
  height: 44px;
  padding: 0 12px;
  width: 300px;
}

.dialog input[type="text"] {
  background-image: linear-gradient(#ddd 2px, #fff 2px);
}

.dialog .wide[type="text"] {
  width: 480px;
}

.dialog select {
  appearance: none;
  background: url("data:image/svg+xml,%3Csvg xmlns='http://www.w3.org/2000/svg' width='48' height='40'%3E%3Cpath fill='%238c8c8c' d='M2 2h2v36H2z'/%3E%3Cpath fill='%23222' d='M18 16h14l-7 9z'/%3E%3C/svg%3E") no-repeat right, linear-gradient(#fff, #e2e2e2);
  border-color: #8c8c8c;
  border-radius: 8px;
}

.hint {
  color: #7e8389;
  font-style: italic;
  line-height: 32px;
  margin-bottom: 18px;
  padding-left: 272px;
}

.check {
  align-items: center;
  display: flex;
  gap: 8px;
  height: 28px;
  width: 160px;
}

.dialog__body > .check {
  margin-left: 2px;
  width: auto;
}

.check--wide {
  width: auto;
}

.check--off {
  color: #999;
}

.check input {
  appearance: none;
  background-image: linear-gradient(#fff, #e4e4e4);
  border: 2px solid #595f64;
  flex: none;
  height: 28px;
  margin: 0;
  width: 28px;
}

.check input[type="checkbox"]:checked {
  background-image: url("data:image/svg+xml,%3Csvg xmlns='http://www.w3.org/2000/svg' viewBox='0 0 24 24'%3E%3Cpath fill='none' stroke='%23333' stroke-width='4' d='M4 13l6 7L20 2'/%3E%3C/svg%3E"), linear-gradient(#fff, #e4e4e4);
}

.check input[type="radio"] {
  border-color: #8c8c8c;
  border-radius: 14px;
}

.check input[type="radio"]:checked {
  background-image: radial-gradient(circle, #333 4px, transparent 5px), linear-gradient(#fff, #e4e4e4);
}

.check input:disabled {
  opacity: .4;
}

.dialog__footer {
  background-color: #dadde5;
  display: flex;
  gap: 16px;
  height: 84px;
  justify-content: flex-end;
  padding: 22px 18px;
  position: relative;
}

.dialog__footer button {
  background-image: linear-gradient(#fff, #e8e8e8);
  border: 2px solid #8c8c8c;
  border-radius: 6px;
  height: 44px;
  width: 140px;
}

.taskbar {
  background-color: #565656;
  border-top: 1px solid #777;
  flex: none;
  height: 13px;
  overflow: hidden;
}

.taskbar svg {
  display: block;
  height: 13px;
  width: 1960px;
}
```
